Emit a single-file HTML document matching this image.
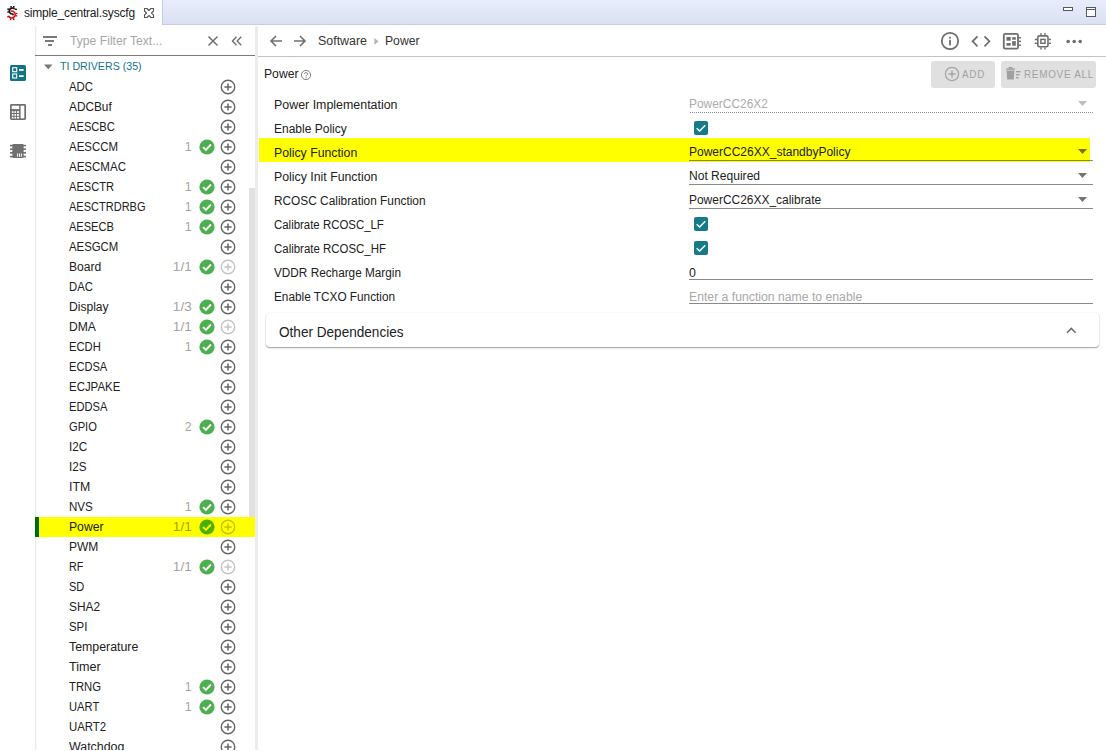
<!DOCTYPE html>
<html><head><meta charset="utf-8"><style>
html,body{margin:0;padding:0;}
body{width:1106px;height:751px;overflow:hidden;position:relative;background:#fff;font-family:"Liberation Sans", sans-serif;}
.t{position:absolute;white-space:nowrap;}
svg{overflow:visible}
</style></head><body>
<div style="position:absolute;left:162px;top:0px;width:944px;height:24px;background:linear-gradient(#e7edfb,#dae1f1);border-left:1px solid #c3cbe0;box-sizing:border-box"></div>
<div style="position:absolute;left:162px;top:24px;width:944px;height:1px;background:#c6cee0"></div>
<svg style="position:absolute;left:0px;top:0px;" width="30" height="28" viewBox="0 0 30 28"><path d="M14.6 9.17 A3 3 0 1 0 12.82 14.05 L13.4 15.4" fill="none" stroke="#141414" stroke-width="1.5"/>
<path d="M10.64 11.3 A3.4 3.4 0 1 1 8.6 15.66" fill="none" stroke="#d6000c" stroke-width="1.5"/>
<g fill="#141414"><rect x="10.3" y="6.0" width="1.5" height="1.8"/><rect x="13.0" y="6.0" width="1.5" height="1.8"/><rect x="7.3" y="8.4" width="1.8" height="1.5"/><rect x="7.3" y="11.3" width="1.8" height="1.4"/><rect x="15.1" y="8.6" width="1.8" height="1.4" transform="rotate(20 16 9.3)"/></g>
<g fill="#d6000c"><rect x="15.6" y="12.9" width="1.8" height="1.3"/><rect x="15.4" y="15.2" width="1.8" height="1.3"/><rect x="9.9" y="18.3" width="1.4" height="1.9"/><rect x="12.9" y="18.3" width="1.5" height="1.9"/><rect x="7.3" y="15.9" width="1.6" height="1.5" transform="rotate(-25 8.1 16.6)"/></g></svg>
<div class="t" style="left:24px;top:5.84px;font-size:12px;line-height:14px;color:#1a1a1a;letter-spacing:-0.18px">simple_central.syscfg</div>
<svg style="position:absolute;left:143px;top:7px;" width="12" height="12" viewBox="0 0 12 12"><path d="M1.5 1.5 L4 1.5 L6 3.5 L8 1.5 L10.5 1.5 L10.5 4 L8.5 6 L10.5 8 L10.5 10.5 L8 10.5 L6 8.5 L4 10.5 L1.5 10.5 L1.5 8 L3.5 6 L1.5 4 Z" fill="none" stroke="#555" stroke-width="1.1" stroke-linejoin="round"/></svg>
<div style="position:absolute;left:1063px;top:7px;width:10px;height:4px;border:1px solid #585858;background:#fff;box-sizing:border-box"></div>
<div style="position:absolute;left:1086px;top:7px;width:10px;height:10px;border:1px solid #585858;background:#fff;box-sizing:border-box"></div>
<div style="position:absolute;left:1087px;top:9px;width:8px;height:1px;background:#585858"></div>
<div style="position:absolute;left:35px;top:26px;width:1px;height:725px;background:#ebebeb"></div>
<div style="position:absolute;left:36px;top:26px;width:1px;height:725px;background:#f8f8f8"></div>
<svg style="position:absolute;left:10px;top:65px;" width="16" height="16" viewBox="0 0 16 16"><rect x="0" y="0" width="16" height="16" rx="1.6" fill="#127386"/>
<rect x="2.7" y="2.7" width="4" height="4" fill="none" stroke="#fff" stroke-width="1.1"/>
<rect x="2.7" y="9" width="4" height="4" fill="none" stroke="#fff" stroke-width="1.1"/>
<rect x="9" y="4" width="4.6" height="1.8" fill="#fff"/><rect x="9" y="10.2" width="4.6" height="1.8" fill="#fff"/></svg>
<svg style="position:absolute;left:10px;top:104px;" width="16" height="16" viewBox="0 0 16 16"><rect x="0" y="0" width="16" height="16" rx="1.4" fill="#6e6e6e"/>
<rect x="1.7" y="1.7" width="7.5" height="3.4" fill="#fff"/><rect x="10.6" y="1.7" width="3.7" height="12.7" fill="#fff"/>
<rect x="1.8" y="7.2" width="1.7" height="1.7" fill="#fff"/><rect x="1.8" y="10.0" width="1.7" height="1.8" fill="#fff"/><rect x="1.8" y="12.8" width="1.7" height="1.7" fill="#fff"/><rect x="4.4" y="7.2" width="1.7" height="1.7" fill="#fff"/><rect x="4.4" y="10.0" width="1.7" height="1.8" fill="#fff"/><rect x="4.4" y="12.8" width="1.7" height="1.7" fill="#fff"/><rect x="7.0" y="7.2" width="2.1" height="1.7" fill="#fff"/><rect x="7.0" y="10.0" width="2.1" height="1.8" fill="#fff"/><rect x="7.0" y="12.8" width="2.1" height="1.7" fill="#fff"/></svg>
<svg style="position:absolute;left:10px;top:144px;" width="16" height="14" viewBox="0 0 16 14"><rect x="2.6" y="0" width="10.8" height="14" rx="0.8" fill="#707070"/>
<g stroke="#707070" stroke-width="1.6"><line x1="0" y1="1.6" x2="16" y2="1.6"/><line x1="0" y1="5.2" x2="16" y2="5.2"/><line x1="0" y1="8.8" x2="16" y2="8.8"/><line x1="0" y1="12.6" x2="16" y2="12.6"/></g>
<rect x="2.6" y="0.6" width="10.8" height="12.8" fill="#707070"/>
<g fill="#fff"><rect x="7.1" y="9.4" width="0.95" height="3.4"/><rect x="9.0" y="9.4" width="0.95" height="3.4"/><rect x="10.9" y="9.4" width="0.95" height="3.4"/></g></svg>
<div style="position:absolute;left:43px;top:36px;width:14px;height:2px;background:#7a7a7a"></div>
<div style="position:absolute;left:45px;top:40px;width:9px;height:2px;background:#7a7a7a"></div>
<div style="position:absolute;left:48px;top:44px;width:4px;height:2px;background:#7a7a7a"></div>
<div class="t" style="left:70px;top:34.34px;font-size:12px;line-height:14px;color:#a6a6a6;transform:scaleX(1.0135);transform-origin:0 0;">Type Filter Text...</div>
<svg style="position:absolute;left:207px;top:35px;" width="12" height="12" viewBox="0 0 12 12"><path d="M1.5 1.5 L10.5 10.5 M10.5 1.5 L1.5 10.5" stroke="#6e6e6e" stroke-width="1.5" fill="none"/></svg>
<svg style="position:absolute;left:231px;top:36px;" width="12" height="10" viewBox="0 0 12 10"><path d="M5.5 0.8 L1.5 5 L5.5 9.2 M10.2 0.8 L6.2 5 L10.2 9.2" stroke="#6e6e6e" stroke-width="1.4" fill="none"/></svg>
<div style="position:absolute;left:35px;top:55px;width:220px;height:1px;background:#7c7c7c"></div>
<svg style="position:absolute;left:44px;top:64px;" width="9" height="6" viewBox="0 0 9 6"><path d="M0 0.5 H8.5 L4.25 5.2 Z" fill="#777"/></svg>
<div class="t" style="left:60px;top:60.12px;font-size:11.2px;line-height:13px;color:#167489;transform:scaleX(0.9515);transform-origin:0 0;">TI DRIVERS (35)</div>
<div style="position:absolute;left:249px;top:188px;width:6px;height:329px;background:#e1e1e1"></div>
<div style="position:absolute;left:255px;top:26px;width:3px;height:725px;background:#ececec"></div>
<div style="position:absolute;left:35px;top:517px;width:220px;height:20px;background:#ffff00"></div>
<div style="position:absolute;left:35px;top:517px;width:4px;height:20px;background:#006b00"></div>
<div style="position:absolute;left:259px;top:138px;width:831px;height:24px;background:#ffff00"></div>
<div class="t" style="left:69px;top:79.84px;font-size:12px;line-height:14px;color:#212121;transform:scaleX(0.9485);transform-origin:0 0;">ADC</div>
<svg style="position:absolute;left:220px;top:79px;" width="16" height="16" viewBox="0 0 16 16"><circle cx="8" cy="8" r="6.75" fill="none" stroke="#666666" stroke-width="1.4"/><path d="M8 4.4 V11.6 M4.4 8 H11.6" stroke="#666666" stroke-width="1.5"/></svg>
<div class="t" style="left:69px;top:99.84px;font-size:12px;line-height:14px;color:#212121;transform:scaleX(0.9850);transform-origin:0 0;">ADCBuf</div>
<svg style="position:absolute;left:220px;top:99px;" width="16" height="16" viewBox="0 0 16 16"><circle cx="8" cy="8" r="6.75" fill="none" stroke="#666666" stroke-width="1.4"/><path d="M8 4.4 V11.6 M4.4 8 H11.6" stroke="#666666" stroke-width="1.5"/></svg>
<div class="t" style="left:69px;top:119.84px;font-size:12px;line-height:14px;color:#212121;transform:scaleX(0.9293);transform-origin:0 0;">AESCBC</div>
<svg style="position:absolute;left:220px;top:119px;" width="16" height="16" viewBox="0 0 16 16"><circle cx="8" cy="8" r="6.75" fill="none" stroke="#666666" stroke-width="1.4"/><path d="M8 4.4 V11.6 M4.4 8 H11.6" stroke="#666666" stroke-width="1.5"/></svg>
<div class="t" style="left:69px;top:139.84px;font-size:12px;line-height:14px;color:#212121;transform:scaleX(0.9529);transform-origin:0 0;">AESCCM</div>
<div class="t" style="right:914.3px;top:139.84px;font-size:12px;line-height:14px;color:#a4a4a4;text-align:right;transform:scaleX(1.0328);transform-origin:100% 0;">1</div>
<svg style="position:absolute;left:199px;top:139px;" width="16" height="16" viewBox="0 0 16 16"><circle cx="8" cy="8" r="7.6" fill="#4caf50"/><path d="M4.1 8.1 L6.9 10.9 L12.0 5.5" fill="none" stroke="#fff" stroke-width="1.9"/></svg>
<svg style="position:absolute;left:220px;top:139px;" width="16" height="16" viewBox="0 0 16 16"><circle cx="8" cy="8" r="6.75" fill="none" stroke="#666666" stroke-width="1.4"/><path d="M8 4.4 V11.6 M4.4 8 H11.6" stroke="#666666" stroke-width="1.5"/></svg>
<div class="t" style="left:69px;top:159.84px;font-size:12px;line-height:14px;color:#212121;transform:scaleX(0.9599);transform-origin:0 0;">AESCMAC</div>
<svg style="position:absolute;left:220px;top:159px;" width="16" height="16" viewBox="0 0 16 16"><circle cx="8" cy="8" r="6.75" fill="none" stroke="#666666" stroke-width="1.4"/><path d="M8 4.4 V11.6 M4.4 8 H11.6" stroke="#666666" stroke-width="1.5"/></svg>
<div class="t" style="left:69px;top:179.84px;font-size:12px;line-height:14px;color:#212121;transform:scaleX(0.9232);transform-origin:0 0;">AESCTR</div>
<div class="t" style="right:914.3px;top:179.84px;font-size:12px;line-height:14px;color:#a4a4a4;text-align:right;transform:scaleX(1.0328);transform-origin:100% 0;">1</div>
<svg style="position:absolute;left:199px;top:179px;" width="16" height="16" viewBox="0 0 16 16"><circle cx="8" cy="8" r="7.6" fill="#4caf50"/><path d="M4.1 8.1 L6.9 10.9 L12.0 5.5" fill="none" stroke="#fff" stroke-width="1.9"/></svg>
<svg style="position:absolute;left:220px;top:179px;" width="16" height="16" viewBox="0 0 16 16"><circle cx="8" cy="8" r="6.75" fill="none" stroke="#666666" stroke-width="1.4"/><path d="M8 4.4 V11.6 M4.4 8 H11.6" stroke="#666666" stroke-width="1.5"/></svg>
<div class="t" style="left:69px;top:199.84px;font-size:12px;line-height:14px;color:#212121;transform:scaleX(0.9183);transform-origin:0 0;">AESCTRDRBG</div>
<div class="t" style="right:914.3px;top:199.84px;font-size:12px;line-height:14px;color:#a4a4a4;text-align:right;transform:scaleX(1.0328);transform-origin:100% 0;">1</div>
<svg style="position:absolute;left:199px;top:199px;" width="16" height="16" viewBox="0 0 16 16"><circle cx="8" cy="8" r="7.6" fill="#4caf50"/><path d="M4.1 8.1 L6.9 10.9 L12.0 5.5" fill="none" stroke="#fff" stroke-width="1.9"/></svg>
<svg style="position:absolute;left:220px;top:199px;" width="16" height="16" viewBox="0 0 16 16"><circle cx="8" cy="8" r="6.75" fill="none" stroke="#666666" stroke-width="1.4"/><path d="M8 4.4 V11.6 M4.4 8 H11.6" stroke="#666666" stroke-width="1.5"/></svg>
<div class="t" style="left:69px;top:219.84px;font-size:12px;line-height:14px;color:#212121;transform:scaleX(0.9211);transform-origin:0 0;">AESECB</div>
<div class="t" style="right:914.3px;top:219.84px;font-size:12px;line-height:14px;color:#a4a4a4;text-align:right;transform:scaleX(1.0328);transform-origin:100% 0;">1</div>
<svg style="position:absolute;left:199px;top:219px;" width="16" height="16" viewBox="0 0 16 16"><circle cx="8" cy="8" r="7.6" fill="#4caf50"/><path d="M4.1 8.1 L6.9 10.9 L12.0 5.5" fill="none" stroke="#fff" stroke-width="1.9"/></svg>
<svg style="position:absolute;left:220px;top:219px;" width="16" height="16" viewBox="0 0 16 16"><circle cx="8" cy="8" r="6.75" fill="none" stroke="#666666" stroke-width="1.4"/><path d="M8 4.4 V11.6 M4.4 8 H11.6" stroke="#666666" stroke-width="1.5"/></svg>
<div class="t" style="left:69px;top:239.84px;font-size:12px;line-height:14px;color:#212121;transform:scaleX(0.9478);transform-origin:0 0;">AESGCM</div>
<svg style="position:absolute;left:220px;top:239px;" width="16" height="16" viewBox="0 0 16 16"><circle cx="8" cy="8" r="6.75" fill="none" stroke="#666666" stroke-width="1.4"/><path d="M8 4.4 V11.6 M4.4 8 H11.6" stroke="#666666" stroke-width="1.5"/></svg>
<div class="t" style="left:69px;top:259.84px;font-size:12px;line-height:14px;color:#212121;transform:scaleX(1.0076);transform-origin:0 0;">Board</div>
<div class="t" style="right:914.3px;top:259.84px;font-size:12px;line-height:14px;color:#a4a4a4;text-align:right;transform:scaleX(1.1297);transform-origin:100% 0;">1/1</div>
<svg style="position:absolute;left:199px;top:259px;" width="16" height="16" viewBox="0 0 16 16"><circle cx="8" cy="8" r="7.6" fill="#4caf50"/><path d="M4.1 8.1 L6.9 10.9 L12.0 5.5" fill="none" stroke="#fff" stroke-width="1.9"/></svg>
<svg style="position:absolute;left:220px;top:259px;" width="16" height="16" viewBox="0 0 16 16"><circle cx="8" cy="8" r="6.75" fill="none" stroke="#c4c4c4" stroke-width="1.4"/><path d="M8 4.4 V11.6 M4.4 8 H11.6" stroke="#c4c4c4" stroke-width="1.5"/></svg>
<div class="t" style="left:69px;top:279.84px;font-size:12px;line-height:14px;color:#212121;transform:scaleX(0.9409);transform-origin:0 0;">DAC</div>
<svg style="position:absolute;left:220px;top:279px;" width="16" height="16" viewBox="0 0 16 16"><circle cx="8" cy="8" r="6.75" fill="none" stroke="#666666" stroke-width="1.4"/><path d="M8 4.4 V11.6 M4.4 8 H11.6" stroke="#666666" stroke-width="1.5"/></svg>
<div class="t" style="left:69px;top:299.84px;font-size:12px;line-height:14px;color:#212121;transform:scaleX(1.0069);transform-origin:0 0;">Display</div>
<div class="t" style="right:914.3px;top:299.84px;font-size:12px;line-height:14px;color:#a4a4a4;text-align:right;transform:scaleX(1.1297);transform-origin:100% 0;">1/3</div>
<svg style="position:absolute;left:199px;top:299px;" width="16" height="16" viewBox="0 0 16 16"><circle cx="8" cy="8" r="7.6" fill="#4caf50"/><path d="M4.1 8.1 L6.9 10.9 L12.0 5.5" fill="none" stroke="#fff" stroke-width="1.9"/></svg>
<svg style="position:absolute;left:220px;top:299px;" width="16" height="16" viewBox="0 0 16 16"><circle cx="8" cy="8" r="6.75" fill="none" stroke="#666666" stroke-width="1.4"/><path d="M8 4.4 V11.6 M4.4 8 H11.6" stroke="#666666" stroke-width="1.5"/></svg>
<div class="t" style="left:69px;top:319.84px;font-size:12px;line-height:14px;color:#212121;transform:scaleX(1.0074);transform-origin:0 0;">DMA</div>
<div class="t" style="right:914.3px;top:319.84px;font-size:12px;line-height:14px;color:#a4a4a4;text-align:right;transform:scaleX(1.1297);transform-origin:100% 0;">1/1</div>
<svg style="position:absolute;left:199px;top:319px;" width="16" height="16" viewBox="0 0 16 16"><circle cx="8" cy="8" r="7.6" fill="#4caf50"/><path d="M4.1 8.1 L6.9 10.9 L12.0 5.5" fill="none" stroke="#fff" stroke-width="1.9"/></svg>
<svg style="position:absolute;left:220px;top:319px;" width="16" height="16" viewBox="0 0 16 16"><circle cx="8" cy="8" r="6.75" fill="none" stroke="#c4c4c4" stroke-width="1.4"/><path d="M8 4.4 V11.6 M4.4 8 H11.6" stroke="#c4c4c4" stroke-width="1.5"/></svg>
<div class="t" style="left:69px;top:339.84px;font-size:12px;line-height:14px;color:#212121;transform:scaleX(0.9338);transform-origin:0 0;">ECDH</div>
<div class="t" style="right:914.3px;top:339.84px;font-size:12px;line-height:14px;color:#a4a4a4;text-align:right;transform:scaleX(1.0328);transform-origin:100% 0;">1</div>
<svg style="position:absolute;left:199px;top:339px;" width="16" height="16" viewBox="0 0 16 16"><circle cx="8" cy="8" r="7.6" fill="#4caf50"/><path d="M4.1 8.1 L6.9 10.9 L12.0 5.5" fill="none" stroke="#fff" stroke-width="1.9"/></svg>
<svg style="position:absolute;left:220px;top:339px;" width="16" height="16" viewBox="0 0 16 16"><circle cx="8" cy="8" r="6.75" fill="none" stroke="#666666" stroke-width="1.4"/><path d="M8 4.4 V11.6 M4.4 8 H11.6" stroke="#666666" stroke-width="1.5"/></svg>
<div class="t" style="left:69px;top:359.84px;font-size:12px;line-height:14px;color:#212121;transform:scaleX(0.9259);transform-origin:0 0;">ECDSA</div>
<svg style="position:absolute;left:220px;top:359px;" width="16" height="16" viewBox="0 0 16 16"><circle cx="8" cy="8" r="6.75" fill="none" stroke="#666666" stroke-width="1.4"/><path d="M8 4.4 V11.6 M4.4 8 H11.6" stroke="#666666" stroke-width="1.5"/></svg>
<div class="t" style="left:69px;top:379.84px;font-size:12px;line-height:14px;color:#212121;transform:scaleX(0.9535);transform-origin:0 0;">ECJPAKE</div>
<svg style="position:absolute;left:220px;top:379px;" width="16" height="16" viewBox="0 0 16 16"><circle cx="8" cy="8" r="6.75" fill="none" stroke="#666666" stroke-width="1.4"/><path d="M8 4.4 V11.6 M4.4 8 H11.6" stroke="#666666" stroke-width="1.5"/></svg>
<div class="t" style="left:69px;top:399.84px;font-size:12px;line-height:14px;color:#212121;transform:scaleX(0.9275);transform-origin:0 0;">EDDSA</div>
<svg style="position:absolute;left:220px;top:399px;" width="16" height="16" viewBox="0 0 16 16"><circle cx="8" cy="8" r="6.75" fill="none" stroke="#666666" stroke-width="1.4"/><path d="M8 4.4 V11.6 M4.4 8 H11.6" stroke="#666666" stroke-width="1.5"/></svg>
<div class="t" style="left:69px;top:419.84px;font-size:12px;line-height:14px;color:#212121;transform:scaleX(0.9286);transform-origin:0 0;">GPIO</div>
<div class="t" style="right:914.3px;top:419.84px;font-size:12px;line-height:14px;color:#a4a4a4;text-align:right;transform:scaleX(1.0328);transform-origin:100% 0;">2</div>
<svg style="position:absolute;left:199px;top:419px;" width="16" height="16" viewBox="0 0 16 16"><circle cx="8" cy="8" r="7.6" fill="#4caf50"/><path d="M4.1 8.1 L6.9 10.9 L12.0 5.5" fill="none" stroke="#fff" stroke-width="1.9"/></svg>
<svg style="position:absolute;left:220px;top:419px;" width="16" height="16" viewBox="0 0 16 16"><circle cx="8" cy="8" r="6.75" fill="none" stroke="#666666" stroke-width="1.4"/><path d="M8 4.4 V11.6 M4.4 8 H11.6" stroke="#666666" stroke-width="1.5"/></svg>
<div class="t" style="left:69px;top:439.84px;font-size:12px;line-height:14px;color:#212121;transform:scaleX(0.9752);transform-origin:0 0;">I2C</div>
<svg style="position:absolute;left:220px;top:439px;" width="16" height="16" viewBox="0 0 16 16"><circle cx="8" cy="8" r="6.75" fill="none" stroke="#666666" stroke-width="1.4"/><path d="M8 4.4 V11.6 M4.4 8 H11.6" stroke="#666666" stroke-width="1.5"/></svg>
<div class="t" style="left:69px;top:459.84px;font-size:12px;line-height:14px;color:#212121;transform:scaleX(0.9721);transform-origin:0 0;">I2S</div>
<svg style="position:absolute;left:220px;top:459px;" width="16" height="16" viewBox="0 0 16 16"><circle cx="8" cy="8" r="6.75" fill="none" stroke="#666666" stroke-width="1.4"/><path d="M8 4.4 V11.6 M4.4 8 H11.6" stroke="#666666" stroke-width="1.5"/></svg>
<div class="t" style="left:69px;top:479.84px;font-size:12px;line-height:14px;color:#212121;transform:scaleX(1.0255);transform-origin:0 0;">ITM</div>
<svg style="position:absolute;left:220px;top:479px;" width="16" height="16" viewBox="0 0 16 16"><circle cx="8" cy="8" r="6.75" fill="none" stroke="#666666" stroke-width="1.4"/><path d="M8 4.4 V11.6 M4.4 8 H11.6" stroke="#666666" stroke-width="1.5"/></svg>
<div class="t" style="left:69px;top:499.84px;font-size:12px;line-height:14px;color:#212121;transform:scaleX(0.9661);transform-origin:0 0;">NVS</div>
<div class="t" style="right:914.3px;top:499.84px;font-size:12px;line-height:14px;color:#a4a4a4;text-align:right;transform:scaleX(1.0328);transform-origin:100% 0;">1</div>
<svg style="position:absolute;left:199px;top:499px;" width="16" height="16" viewBox="0 0 16 16"><circle cx="8" cy="8" r="7.6" fill="#4caf50"/><path d="M4.1 8.1 L6.9 10.9 L12.0 5.5" fill="none" stroke="#fff" stroke-width="1.9"/></svg>
<svg style="position:absolute;left:220px;top:499px;" width="16" height="16" viewBox="0 0 16 16"><circle cx="8" cy="8" r="6.75" fill="none" stroke="#666666" stroke-width="1.4"/><path d="M8 4.4 V11.6 M4.4 8 H11.6" stroke="#666666" stroke-width="1.5"/></svg>
<div class="t" style="left:69px;top:519.84px;font-size:12px;line-height:14px;color:#212121;transform:scaleX(1.0151);transform-origin:0 0;">Power</div>
<div class="t" style="right:914.3px;top:519.84px;font-size:12px;line-height:14px;color:#a4a400;text-align:right;transform:scaleX(1.1297);transform-origin:100% 0;">1/1</div>
<svg style="position:absolute;left:199px;top:519px;" width="16" height="16" viewBox="0 0 16 16"><circle cx="8" cy="8" r="7.6" fill="#4caf00"/><path d="M4.1 8.1 L6.9 10.9 L12.0 5.5" fill="none" stroke="#ffff00" stroke-width="1.9"/></svg>
<svg style="position:absolute;left:220px;top:519px;" width="16" height="16" viewBox="0 0 16 16"><circle cx="8" cy="8" r="6.75" fill="none" stroke="#c4c400" stroke-width="1.4"/><path d="M8 4.4 V11.6 M4.4 8 H11.6" stroke="#c4c400" stroke-width="1.5"/></svg>
<div class="t" style="left:69px;top:539.84px;font-size:12px;line-height:14px;color:#212121;">PWM</div>
<svg style="position:absolute;left:220px;top:539px;" width="16" height="16" viewBox="0 0 16 16"><circle cx="8" cy="8" r="6.75" fill="none" stroke="#666666" stroke-width="1.4"/><path d="M8 4.4 V11.6 M4.4 8 H11.6" stroke="#666666" stroke-width="1.5"/></svg>
<div class="t" style="left:69px;top:559.84px;font-size:12px;line-height:14px;color:#212121;transform:scaleX(0.8963);transform-origin:0 0;">RF</div>
<div class="t" style="right:914.3px;top:559.84px;font-size:12px;line-height:14px;color:#a4a4a4;text-align:right;transform:scaleX(1.1297);transform-origin:100% 0;">1/1</div>
<svg style="position:absolute;left:199px;top:559px;" width="16" height="16" viewBox="0 0 16 16"><circle cx="8" cy="8" r="7.6" fill="#4caf50"/><path d="M4.1 8.1 L6.9 10.9 L12.0 5.5" fill="none" stroke="#fff" stroke-width="1.9"/></svg>
<svg style="position:absolute;left:220px;top:559px;" width="16" height="16" viewBox="0 0 16 16"><circle cx="8" cy="8" r="6.75" fill="none" stroke="#c4c4c4" stroke-width="1.4"/><path d="M8 4.4 V11.6 M4.4 8 H11.6" stroke="#c4c4c4" stroke-width="1.5"/></svg>
<div class="t" style="left:69px;top:579.84px;font-size:12px;line-height:14px;color:#212121;transform:scaleX(0.9196);transform-origin:0 0;">SD</div>
<svg style="position:absolute;left:220px;top:579px;" width="16" height="16" viewBox="0 0 16 16"><circle cx="8" cy="8" r="6.75" fill="none" stroke="#666666" stroke-width="1.4"/><path d="M8 4.4 V11.6 M4.4 8 H11.6" stroke="#666666" stroke-width="1.5"/></svg>
<div class="t" style="left:69px;top:599.84px;font-size:12px;line-height:14px;color:#212121;transform:scaleX(0.9899);transform-origin:0 0;">SHA2</div>
<svg style="position:absolute;left:220px;top:599px;" width="16" height="16" viewBox="0 0 16 16"><circle cx="8" cy="8" r="6.75" fill="none" stroke="#666666" stroke-width="1.4"/><path d="M8 4.4 V11.6 M4.4 8 H11.6" stroke="#666666" stroke-width="1.5"/></svg>
<div class="t" style="left:69px;top:619.84px;font-size:12px;line-height:14px;color:#212121;transform:scaleX(0.9489);transform-origin:0 0;">SPI</div>
<svg style="position:absolute;left:220px;top:619px;" width="16" height="16" viewBox="0 0 16 16"><circle cx="8" cy="8" r="6.75" fill="none" stroke="#666666" stroke-width="1.4"/><path d="M8 4.4 V11.6 M4.4 8 H11.6" stroke="#666666" stroke-width="1.5"/></svg>
<div class="t" style="left:69px;top:639.84px;font-size:12px;line-height:14px;color:#212121;transform:scaleX(1.0285);transform-origin:0 0;">Temperature</div>
<svg style="position:absolute;left:220px;top:639px;" width="16" height="16" viewBox="0 0 16 16"><circle cx="8" cy="8" r="6.75" fill="none" stroke="#666666" stroke-width="1.4"/><path d="M8 4.4 V11.6 M4.4 8 H11.6" stroke="#666666" stroke-width="1.5"/></svg>
<div class="t" style="left:69px;top:659.84px;font-size:12px;line-height:14px;color:#212121;transform:scaleX(1.0496);transform-origin:0 0;">Timer</div>
<svg style="position:absolute;left:220px;top:659px;" width="16" height="16" viewBox="0 0 16 16"><circle cx="8" cy="8" r="6.75" fill="none" stroke="#666666" stroke-width="1.4"/><path d="M8 4.4 V11.6 M4.4 8 H11.6" stroke="#666666" stroke-width="1.5"/></svg>
<div class="t" style="left:69px;top:679.84px;font-size:12px;line-height:14px;color:#212121;transform:scaleX(0.9407);transform-origin:0 0;">TRNG</div>
<div class="t" style="right:914.3px;top:679.84px;font-size:12px;line-height:14px;color:#a4a4a4;text-align:right;transform:scaleX(1.0328);transform-origin:100% 0;">1</div>
<svg style="position:absolute;left:199px;top:679px;" width="16" height="16" viewBox="0 0 16 16"><circle cx="8" cy="8" r="7.6" fill="#4caf50"/><path d="M4.1 8.1 L6.9 10.9 L12.0 5.5" fill="none" stroke="#fff" stroke-width="1.9"/></svg>
<svg style="position:absolute;left:220px;top:679px;" width="16" height="16" viewBox="0 0 16 16"><circle cx="8" cy="8" r="6.75" fill="none" stroke="#666666" stroke-width="1.4"/><path d="M8 4.4 V11.6 M4.4 8 H11.6" stroke="#666666" stroke-width="1.5"/></svg>
<div class="t" style="left:69px;top:699.84px;font-size:12px;line-height:14px;color:#212121;transform:scaleX(0.9313);transform-origin:0 0;">UART</div>
<div class="t" style="right:914.3px;top:699.84px;font-size:12px;line-height:14px;color:#a4a4a4;text-align:right;transform:scaleX(1.0328);transform-origin:100% 0;">1</div>
<svg style="position:absolute;left:199px;top:699px;" width="16" height="16" viewBox="0 0 16 16"><circle cx="8" cy="8" r="7.6" fill="#4caf50"/><path d="M4.1 8.1 L6.9 10.9 L12.0 5.5" fill="none" stroke="#fff" stroke-width="1.9"/></svg>
<svg style="position:absolute;left:220px;top:699px;" width="16" height="16" viewBox="0 0 16 16"><circle cx="8" cy="8" r="6.75" fill="none" stroke="#666666" stroke-width="1.4"/><path d="M8 4.4 V11.6 M4.4 8 H11.6" stroke="#666666" stroke-width="1.5"/></svg>
<div class="t" style="left:69px;top:719.84px;font-size:12px;line-height:14px;color:#212121;transform:scaleX(0.9486);transform-origin:0 0;">UART2</div>
<svg style="position:absolute;left:220px;top:719px;" width="16" height="16" viewBox="0 0 16 16"><circle cx="8" cy="8" r="6.75" fill="none" stroke="#666666" stroke-width="1.4"/><path d="M8 4.4 V11.6 M4.4 8 H11.6" stroke="#666666" stroke-width="1.5"/></svg>
<div class="t" style="left:69px;top:739.84px;font-size:12px;line-height:14px;color:#212121;transform:scaleX(1.0328);transform-origin:0 0;">Watchdog</div>
<svg style="position:absolute;left:220px;top:739px;" width="16" height="16" viewBox="0 0 16 16"><circle cx="8" cy="8" r="6.75" fill="none" stroke="#666666" stroke-width="1.4"/><path d="M8 4.4 V11.6 M4.4 8 H11.6" stroke="#666666" stroke-width="1.5"/></svg>
<div style="position:absolute;left:258px;top:56px;width:848px;height:1px;background:#c4c4c4"></div>
<svg style="position:absolute;left:269px;top:34px;" width="14" height="14" viewBox="0 0 14 14"><path d="M13 7 H2.2 M7 2 L2 7 L7 12" fill="none" stroke="#707070" stroke-width="1.6"/></svg>
<svg style="position:absolute;left:293px;top:34px;" width="14" height="14" viewBox="0 0 14 14"><path d="M1 7 H11.8 M7 2 L12 7 L7 12" fill="none" stroke="#707070" stroke-width="1.6"/></svg>
<div class="t" style="left:318px;top:33.84px;font-size:12px;line-height:14px;color:#333;transform:scaleX(1.0344);transform-origin:0 0;">Software</div>
<svg style="position:absolute;left:374px;top:38px;" width="6" height="8" viewBox="0 0 6 8"><path d="M0.4 0 L4.6 3.4 L0.4 6.8 Z" fill="#b4b4b4"/></svg>
<div class="t" style="left:385px;top:33.84px;font-size:12px;line-height:14px;color:#333;transform:scaleX(1.0151);transform-origin:0 0;">Power</div>
<svg style="position:absolute;left:940px;top:31.4px;" width="20" height="20" viewBox="0 0 20 20"><circle cx="10" cy="10" r="8.2" fill="none" stroke="#6e6e6e" stroke-width="1.8"/><rect x="9.1" y="5.8" width="1.8" height="1.8" fill="#6e6e6e"/><rect x="9.1" y="8.8" width="1.8" height="5.6" fill="#6e6e6e"/></svg>
<svg style="position:absolute;left:970px;top:34px;" width="22" height="14" viewBox="0 0 22 14"><path d="M7.5 2.3 L2.6 7.3 L7.5 12.3 M14.5 2.3 L19.4 7.3 L14.5 12.3" fill="none" stroke="#6e6e6e" stroke-width="1.7"/></svg>
<svg style="position:absolute;left:1002px;top:32px;" width="21" height="18" viewBox="0 0 21 18"><rect x="1.8" y="1.95" width="14.2" height="14.7" rx="1.4" fill="none" stroke="#6e6e6e" stroke-width="1.8"/>
<g fill="#6e6e6e"><rect x="4.5" y="5" width="4.2" height="3.7"/><rect x="4.5" y="11" width="4.2" height="2.7"/><rect x="10.2" y="5.2" width="3.6" height="2.5"/><rect x="10.2" y="9.1" width="3.6" height="4.6"/>
<rect x="16.6" y="5.1" width="2.4" height="1.4"/><rect x="16.6" y="8.7" width="2.4" height="1.4"/><rect x="16.6" y="12.4" width="2.4" height="1.4"/></g></svg>
<svg style="position:absolute;left:1034px;top:32px;" width="18" height="19" viewBox="0 0 18 19"><rect x="3.8" y="3.9" width="10.2" height="10.9" rx="1.5" fill="none" stroke="#6e6e6e" stroke-width="1.6"/>
<rect x="6.85" y="7.4" width="4.2" height="3.9" fill="none" stroke="#6e6e6e" stroke-width="1.45"/>
<g fill="#6e6e6e"><rect x="6.3" y="1.1" width="1.4" height="2.2"/><rect x="10.3" y="1.1" width="1.4" height="2.2"/><rect x="6.3" y="15.4" width="1.4" height="2.2"/><rect x="10.3" y="15.4" width="1.4" height="2.2"/>
<rect x="0.8" y="6.8" width="2.3" height="1.4"/><rect x="0.8" y="10.6" width="2.3" height="1.4"/><rect x="14.7" y="6.8" width="2.3" height="1.4"/><rect x="14.7" y="10.6" width="2.3" height="1.4"/></g></svg>
<svg style="position:absolute;left:1066px;top:39px;" width="17" height="5" viewBox="0 0 17 5"><circle cx="2.2" cy="2.5" r="1.8" fill="#6e6e6e"/><circle cx="8.2" cy="2.5" r="1.8" fill="#6e6e6e"/><circle cx="14.2" cy="2.5" r="1.8" fill="#6e6e6e"/></svg>
<div class="t" style="left:264px;top:66.84px;font-size:12px;line-height:14px;color:#212121;transform:scaleX(1.0151);transform-origin:0 0;">Power</div>
<svg style="position:absolute;left:300px;top:69px;" width="12" height="12" viewBox="0 0 12 12"><circle cx="6" cy="6" r="4.6" fill="none" stroke="#757575" stroke-width="0.9"/><path d="M4.4 4.9 C4.4 3.2 7.6 3.2 7.6 4.9 C7.6 6.2 6 6.1 6 7.4" fill="none" stroke="#757575" stroke-width="0.9"/><circle cx="6" cy="8.8" r="0.6" fill="#757575"/></svg>
<div style="position:absolute;left:931px;top:61px;width:64px;height:27px;background:#e0e0e0;border-radius:3px"></div>
<div style="position:absolute;left:1001px;top:61px;width:95px;height:27px;background:#e0e0e0;border-radius:3px"></div>
<svg style="position:absolute;left:944px;top:66px;" width="16" height="16" viewBox="0 0 16 16"><circle cx="8" cy="8" r="6.6" fill="none" stroke="#a6a6a6" stroke-width="1.3"/><path d="M8 4.4 V11.6 M4.4 8 H11.6" stroke="#a6a6a6" stroke-width="1.5"/></svg>
<div class="t" style="left:962px;top:69.43px;font-size:10.3px;line-height:12px;color:#a2a2a2;transform:scaleX(0.9581);transform-origin:0 0;letter-spacing:0.8px;">ADD</div>
<svg style="position:absolute;left:1005px;top:67px;" width="17" height="13" viewBox="0 0 17 13"><g fill="#a0a0a0"><rect x="1" y="1.4" width="9" height="1.4"/><rect x="3.6" y="0" width="3.8" height="1.6"/>
<path d="M1.6 3.4 H9.4 L8.8 12.4 H2.2 Z"/><rect x="11" y="4" width="4.6" height="1.4"/><rect x="11" y="7" width="3.6" height="1.4"/><rect x="11" y="10" width="2.6" height="1.4"/></g></svg>
<div class="t" style="left:1024px;top:69.43px;font-size:10.3px;line-height:12px;color:#a2a2a2;transform:scaleX(0.9614);transform-origin:0 0;letter-spacing:0.75px;">REMOVE ALL</div>
<div class="t" style="left:274px;top:97.84px;font-size:12px;line-height:14px;color:#212121;transform:scaleX(1.0345);transform-origin:0 0;">Power Implementation</div>
<div class="t" style="left:274px;top:121.84px;font-size:12px;line-height:14px;color:#212121;">Enable Policy</div>
<div class="t" style="left:274px;top:145.84px;font-size:12px;line-height:14px;color:#212121;transform:scaleX(1.0231);transform-origin:0 0;">Policy Function</div>
<div class="t" style="left:274px;top:169.84px;font-size:12px;line-height:14px;color:#212121;transform:scaleX(1.0266);transform-origin:0 0;">Policy Init Function</div>
<div class="t" style="left:274px;top:193.84px;font-size:12px;line-height:14px;color:#212121;transform:scaleX(0.9880);transform-origin:0 0;">RCOSC Calibration Function</div>
<div class="t" style="left:274px;top:217.84px;font-size:12px;line-height:14px;color:#212121;transform:scaleX(0.9519);transform-origin:0 0;">Calibrate RCOSC_LF</div>
<div class="t" style="left:274px;top:241.84px;font-size:12px;line-height:14px;color:#212121;transform:scaleX(0.9540);transform-origin:0 0;">Calibrate RCOSC_HF</div>
<div class="t" style="left:274px;top:265.84px;font-size:12px;line-height:14px;color:#212121;transform:scaleX(0.9813);transform-origin:0 0;">VDDR Recharge Margin</div>
<div class="t" style="left:274px;top:289.84px;font-size:12px;line-height:14px;color:#212121;transform:scaleX(0.9832);transform-origin:0 0;">Enable TCXO Function</div>
<div class="t" style="left:689px;top:96.64px;font-size:12px;line-height:14px;color:#ababab;transform:scaleX(0.9936);transform-origin:0 0;">PowerCC26X2</div>
<div style="position:absolute;left:689px;top:112px;width:404px;height:1px;background-image:linear-gradient(90deg,transparent 50%,#8a8a8a 50%);background-size:2px 1px"></div>
<svg style="position:absolute;left:1078px;top:101px;" width="9" height="5" viewBox="0 0 9 5"><path d="M0 0 H9 L4.5 5 Z" fill="#bdbdbd"/></svg>
<svg style="position:absolute;left:694px;top:121px;" width="14" height="14" viewBox="0 0 14 14"><rect x="0" y="0" width="14" height="14" rx="2" fill="#157b8b"/><path d="M2.7 7.3 L5.6 10.1 L11.3 4.3" fill="none" stroke="#fff" stroke-width="1.4"/></svg>
<div class="t" style="left:689px;top:144.54px;font-size:12px;line-height:14px;color:#212121;">PowerCC26XX_standbyPolicy</div>
<div style="position:absolute;left:689px;top:160px;width:404px;height:1px;background:#8a8a00"></div>
<div style="position:absolute;left:1090px;top:160px;width:3px;height:1px;background:#8a8a8a"></div>
<svg style="position:absolute;left:1078px;top:149px;" width="9" height="5" viewBox="0 0 9 5"><path d="M0 0 H9 L4.5 5 Z" fill="#757500"/></svg>
<div class="t" style="left:689px;top:169.34px;font-size:12px;line-height:14px;color:#212121;transform:scaleX(1.0047);transform-origin:0 0;">Not Required</div>
<div style="position:absolute;left:689px;top:184px;width:404px;height:1px;background:#8a8a8a"></div>
<svg style="position:absolute;left:1078px;top:173px;" width="9" height="5" viewBox="0 0 9 5"><path d="M0 0 H9 L4.5 5 Z" fill="#757575"/></svg>
<div class="t" style="left:689px;top:193.34px;font-size:12px;line-height:14px;color:#212121;transform:scaleX(0.9963);transform-origin:0 0;">PowerCC26XX_calibrate</div>
<div style="position:absolute;left:689px;top:208px;width:404px;height:1px;background:#8a8a8a"></div>
<svg style="position:absolute;left:1078px;top:197px;" width="9" height="5" viewBox="0 0 9 5"><path d="M0 0 H9 L4.5 5 Z" fill="#757575"/></svg>
<svg style="position:absolute;left:694px;top:217px;" width="14" height="14" viewBox="0 0 14 14"><rect x="0" y="0" width="14" height="14" rx="2" fill="#157b8b"/><path d="M2.7 7.3 L5.6 10.1 L11.3 4.3" fill="none" stroke="#fff" stroke-width="1.4"/></svg>
<svg style="position:absolute;left:694px;top:241px;" width="14" height="14" viewBox="0 0 14 14"><rect x="0" y="0" width="14" height="14" rx="2" fill="#157b8b"/><path d="M2.7 7.3 L5.6 10.1 L11.3 4.3" fill="none" stroke="#fff" stroke-width="1.4"/></svg>
<div class="t" style="left:689px;top:265.64px;font-size:12px;line-height:14px;color:#212121;transform:scaleX(1.0328);transform-origin:0 0;">0</div>
<div style="position:absolute;left:689px;top:279px;width:404px;height:1px;background:#8a8a8a"></div>
<div class="t" style="left:689px;top:289.84px;font-size:12px;line-height:14px;color:#a8a8a8;transform:scaleX(1.0181);transform-origin:0 0;">Enter a function name to enable</div>
<div style="position:absolute;left:689px;top:303px;width:404px;height:1px;background:#8a8a8a"></div>
<div style="position:absolute;left:266px;top:313px;width:833px;height:34px;background:#fff;border-radius:4px;box-shadow:0 1px 1.5px rgba(0,0,0,0.38),0 0 1px rgba(0,0,0,0.14)"></div>
<div class="t" style="left:278.5px;top:323.65px;font-size:14px;line-height:16px;color:#212121;transform:scaleX(0.9700);transform-origin:0 0;">Other Dependencies</div>
<svg style="position:absolute;left:1066px;top:326px;" width="11" height="8" viewBox="0 0 11 8"><path d="M1 6.8 L5.3 2.5 L9.6 6.8" fill="none" stroke="#6e6e6e" stroke-width="1.6"/></svg>
<div style="position:absolute;left:0px;top:750px;width:1106px;height:1px;background:#fff"></div>

</body></html>
